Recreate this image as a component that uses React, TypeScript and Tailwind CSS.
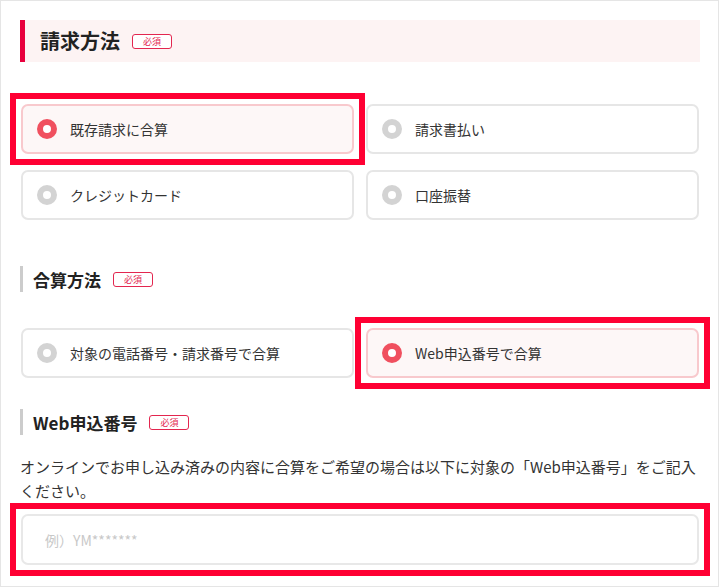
import React from "react";

const FONT = { fontFamily: '"Noto Sans CJK JP", "Noto Sans", sans-serif' };

function Badge() {
  return (
    <span className="ml-3 inline-flex h-[15px] w-[40px] items-center justify-center rounded-[3px] border border-[#e3264f] bg-white text-[9px] leading-none text-[#e3264f]">
      必須
    </span>
  );
}

function SubHeading({ children }: { children: React.ReactNode }) {
  return (
    <div className="flex h-[26px] items-center border-l-[3px] border-[#cccccc] pl-[10px]">
      <span className="text-[17px] font-bold leading-none text-[#222]">{children}</span>
      <Badge />
    </div>
  );
}

function Radio({ checked }: { checked: boolean }) {
  return (
    <span
      className={
        checked
          ? "block h-[20px] w-[20px] shrink-0 rounded-full border-[6px] border-[#f0505f] bg-white"
          : "block h-[20px] w-[20px] shrink-0 rounded-full border-[6px] border-[#d3d3d3] bg-white"
      }
    />
  );
}

function Option({ label, checked, marked }: { label: string; checked?: boolean; marked?: boolean }) {
  return (
    <div className="relative">
      <div
        className={
          checked
            ? "flex h-[50px] items-center gap-[13px] rounded-[7px] border-2 border-[#f8c9cd] bg-[#fdf7f7] pl-[14px]"
            : "flex h-[50px] items-center gap-[13px] rounded-[7px] border-2 border-[#e6e6e6] bg-white pl-[14px]"
        }
      >
        <Radio checked={!!checked} />
        <span className="text-[14px] leading-none text-[#333]">{label}</span>
      </div>
      {marked && (
        <div className="pointer-events-none absolute -inset-[11px] border-[6px] border-[#ff0033]" />
      )}
    </div>
  );
}

export default function App() {
  return (
    <div style={FONT} className="h-[587px] w-[719px] border border-[#e5e5e5] bg-white pl-[19px] pr-[18px] pt-[19px]">
      <div className="flex h-[42px] items-center border-l-[5px] border-[#e8003d] bg-[#fdf3f3] pl-[15px]">
        <span className="text-[20px] font-bold leading-none text-[#222]">請求方法</span>
        <Badge />
      </div>

      <div className="mx-px mt-[42px] grid grid-cols-2 gap-x-[12px] gap-y-[16px]">
        <Option label="既存請求に合算" checked marked />
        <Option label="請求書払い" />
        <Option label="クレジットカード" />
        <Option label="口座振替" />
      </div>

      <div className="mt-[46px]">
        <SubHeading>合算方法</SubHeading>
      </div>

      <div className="mx-px mt-[36px] grid grid-cols-2 gap-x-[12px]">
        <Option label="対象の電話番号・請求番号で合算" />
        <Option label="Web申込番号で合算" checked marked />
      </div>

      <div className="mt-[31px]">
        <SubHeading>Web申込番号</SubHeading>
      </div>

      <p className="mt-[20px] text-[15px] leading-[24px] text-[#333]">
        オンラインでお申し込み済みの内容に合算をご希望の場合は以下に対象の「Web申込番号」をご記入ください。
      </p>

      <div className="relative mx-px mt-[11px]">
        <input
          type="text"
          placeholder="例）YM*******"
          style={FONT}
          className="block h-[51px] w-full rounded-[7px] border-2 border-[#e8e8e8] bg-white pl-[22px] text-[14px] text-[#333] outline-none placeholder:text-[#c8c8c8]"
        />
        <div className="pointer-events-none absolute -inset-[11px] border-[6px] border-[#ff0033]" />
      </div>
    </div>
  );
}
